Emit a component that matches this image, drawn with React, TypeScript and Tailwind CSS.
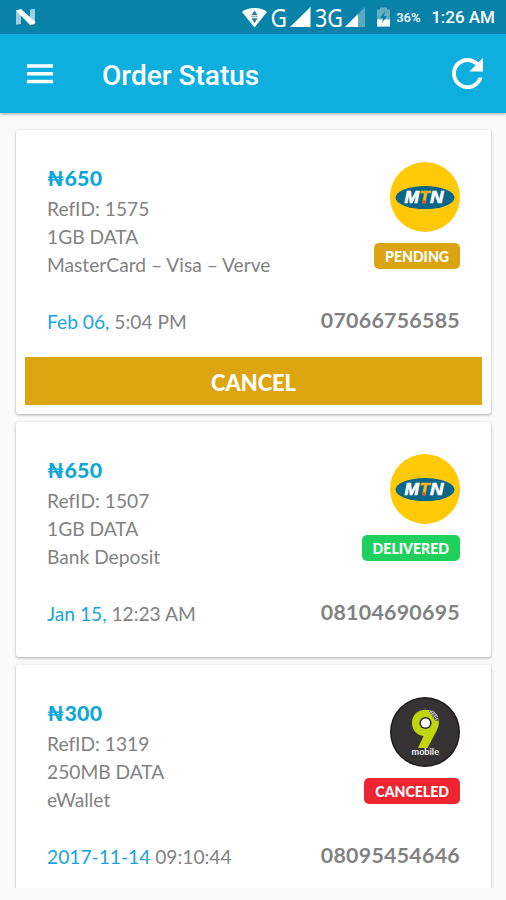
type Order = {
  amount: string;
  refId: string;
  plan: string;
  method: string;
  date: string;
  time: string;
  phone: string;
  status: "PENDING" | "DELIVERED" | "CANCELED";
  network: "mtn" | "9mobile";
};

const orders: Order[] = [
  {
    amount: "650", refId: "1575", plan: "1GB DATA", method: "MasterCard – Visa – Verve",
    date: "Feb 06,", time: "5:04 PM", phone: "07066756585", status: "PENDING", network: "mtn",
  },
  {
    amount: "650", refId: "1507", plan: "1GB DATA", method: "Bank Deposit",
    date: "Jan 15,", time: "12:23 AM", phone: "08104690695", status: "DELIVERED", network: "mtn",
  },
  {
    amount: "300", refId: "1319", plan: "250MB DATA", method: "eWallet",
    date: "2017-11-14", time: "09:10:44", phone: "08095454646", status: "CANCELED", network: "9mobile",
  },
];

const badgeColors = {
  PENDING: "bg-[#dba311]",
  DELIVERED: "bg-[#1fd15c]",
  CANCELED: "bg-[#ee2530]",
};

function MtnLogo() {
  return (
    <svg width="70" height="70" viewBox="0 0 70 70">
      <circle cx="35" cy="35" r="35" fill="#ffc905" />
      <ellipse cx="35" cy="35.6" rx="29.5" ry="11.5" fill="#0b668b" />
      <g fontFamily="Liberation Sans, sans-serif" fontWeight="bold" fontSize="16" fontStyle="italic" strokeWidth="0.6">
        <text x="14.5" y="41.4" fill="#fff" stroke="#fff" textLength="14.5" lengthAdjust="spacingAndGlyphs">M</text>
        <text x="29.5" y="41.4" fill="#fdb913" stroke="#fdb913" textLength="10" lengthAdjust="spacingAndGlyphs">T</text>
        <text x="40" y="41.4" fill="#fff" stroke="#fff" textLength="13.5" lengthAdjust="spacingAndGlyphs">N</text>
      </g>
      <path d="M32.5 38.5h3.2l-.8 3.3h-2.4z" fill="#d9502b" />
    </svg>
  );
}

function NineMobileLogo() {
  return (
    <svg width="70" height="70" viewBox="0 0 70 70">
      <circle cx="35" cy="35" r="35" fill="#1c1a1b" />
      <circle cx="35" cy="35" r="33.5" fill="#353233" />
      <path
        d="M35.5 12.8C27.5 12.8 22 18.5 22 26C22 33 27 38.5 33.5 39L28 51H37.5L46.5 34C50 27.5 49.5 21 45.5 17C43 14.3 39.5 12.8 35.5 12.8Z"
        fill="#bfd70a"
      />
      <path d="M39 14.5l3-1.5 5.5 4.5 1 6-3 .5z" fill="#555" />
      <path d="M39 16l4-2M41 18l4-3M43 20.5l4-3M45 23l3-2M40 14l7 8M43 14l5 6" stroke="#d4d4d4" strokeWidth="0.8" />
      <circle cx="35.5" cy="26" r="6.1" fill="#2a2829" />
      <circle cx="35.5" cy="26" r="4.6" fill="#fff" />
      <text x="21.5" y="58" fill="#f1f1f1" fontFamily="Lato, sans-serif" fontSize="8.5" fontWeight="bold" textLength="27.5" lengthAdjust="spacingAndGlyphs">
        mobile
      </text>
    </svg>
  );
}

function StatusBar() {
  return (
    <div className="h-[34px] shrink-0 bg-[#0882a9] flex items-center pl-[15px] pr-[11px] text-white font-[Roboto,sans-serif]">
      <svg width="21" height="18" viewBox="0 0 21 18">
        <path d="M1 2.5L6 2v14l-5 .8zM15 1.5l5-.8v14l-5 .8z" fill="#9fd0df" />
        <path d="M1 2.5L6 1l14.5 13-1.2 2.2L15 17z" fill="#fff" />
      </svg>
      {/* Wifi and both SIM signals */}
      <svg className="ml-auto overflow-visible" width="126" height="34" viewBox="241 0 126 34">
        <path d="M242 12C247.5 6.5 261.5 6.5 267 12L254.5 27.5Z" fill="#fff" />
        <path d="M254.5 10.5l3.2 4.8h-6.4zM254.5 23l3.2-4.8h-6.4z" fill="#337f98" />
        <path d="M251.3 16.7h6.4" stroke="#6aa6b9" strokeWidth="1" />
        <g fill="#fff" fontFamily="Noto Sans, sans-serif" fontSize="25.5">
          <text x="270.5" y="26.6" textLength="16.5" lengthAdjust="spacingAndGlyphs">G</text>
          <text x="315" y="26.6" textLength="28" lengthAdjust="spacingAndGlyphs">3G</text>
        </g>
        <path d="M310.5 7v20H290z" fill="#fff" />
        <path d="M365 7v20h-20z" fill="#5ba8c2" />
        <path d="M358 14v13h-13z" fill="#fff" />
      </svg>
      <svg className="ml-[9px]" width="15" height="20" viewBox="0 0 15 20">
        <path d="M1 2.5h3V.5h7v2h3v17H1z" fill="#64adc4" />
        <path d="M1 12.5h13v7H1z" fill="#fff" />
        <path d="M9 4L4 11h3.2L6 16l5-7H8z" fill="#0882a9" />
      </svg>
      <span className="ml-[5px] w-[25px] text-[13px] font-medium mt-[2px]">36%</span>
      <span className="ml-[10px] text-[17px] font-medium mt-[1px]">1:26 AM</span>
    </div>
  );
}

function AppBar() {
  return (
    <header className="relative h-[79px] shrink-0 bg-[#0eafdf] flex items-center pl-[27px] pr-[23px] text-white shadow-[0_1px_3px_rgba(0,0,0,0.35)]">
      <svg width="26" height="20" viewBox="0 0 26 20" fill="#fff">
        <rect width="26" height="3.5" y="0.2" />
        <rect width="26" height="3.5" y="8" />
        <rect width="26" height="3.5" y="15.8" />
      </svg>
      <h1 className="ml-[49px] mt-[4px] text-[28px] font-medium font-[Roboto,sans-serif]">Order Status</h1>
      <svg className="ml-auto" width="31" height="31" viewBox="4 4 16 16" fill="#fff">
        <path d="M17.65 6.35C16.2 4.9 14.21 4 12 4c-4.42 0-7.99 3.58-7.99 8s3.57 8 7.99 8c3.73 0 6.84-2.55 7.73-6h-2.08c-.82 2.33-3.04 4-5.65 4-3.31 0-6-2.69-6-6s2.69-6 6-6c1.66 0 3.14.69 4.22 1.78L13 11h7V4l-2.35 2.35z" />
      </svg>
    </header>
  );
}

function OrderCard({ order }: { order: Order }) {
  return (
    <article className="shrink-0 bg-white rounded-[3px] shadow-[0_1px_3px_rgba(0,0,0,0.32)]">
      <div className="flex justify-between px-[31px] pt-8 text-[19.2px] leading-7 text-[#828282]">
        <div>
          <p className="mt-px h-8 text-[21.4px] leading-[30px] tracking-[0.3px] font-black text-[#0da8d9]">₦{order.amount}</p>
          <p>RefID: {order.refId}</p>
          <p>{order.plan}</p>
          <p>{order.method}</p>
        </div>
        <div className="flex flex-col items-end">
          {order.network === "mtn" ? <MtnLogo /> : <NineMobileLogo />}
          <span className={`mt-[11px] h-[26px] px-[11px] rounded-[5px] text-[14.1px] leading-[27px] font-black text-white ${badgeColors[order.status]}`}>
            {order.status}
          </span>
        </div>
      </div>
      <div className="flex justify-between items-start px-[31px] pt-[29px] h-[78px] text-[19.2px] leading-7 text-[#828282]">
        <p>
          <span className="text-[#18a5dc]">{order.date}</span> {order.time}
        </p>
        <p className="-mt-[2px] text-[21.4px] tracking-[0.25px] font-bold">{order.phone}</p>
      </div>
      {order.status === "PENDING" && (
        <div className="px-[9px] pb-[9px]">
          <button className="block w-full h-12 bg-[#dda50f] text-[21.8px] leading-[51px] font-black text-white">CANCEL</button>
        </div>
      )}
      {order.status !== "PENDING" && <div className="h-2" />}
    </article>
  );
}

export default function App() {
  return (
    <div className="h-[900px] w-[506px] flex flex-col overflow-hidden bg-[#fafafa] font-[Lato,sans-serif]">
      <StatusBar />
      <AppBar />
      <main className="h-[775px] overflow-hidden pl-4 pr-[15px] pt-[17px] flex flex-col gap-2">
        {orders.map((order) => (
          <OrderCard key={order.refId} order={order} />
        ))}
      </main>
    </div>
  );
}
